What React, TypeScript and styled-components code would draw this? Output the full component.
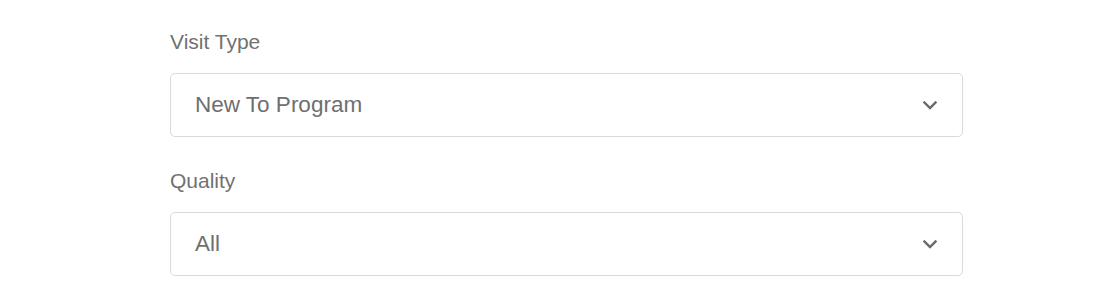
import styled, { createGlobalStyle } from "styled-components";

const GlobalStyle = createGlobalStyle`
  body {
    margin: 0;
    background: #ffffff;
    font-family: "Liberation Sans", Arial, Helvetica, sans-serif;
  }
`

const Form = styled.div`
  display: flex;
  flex-direction: column;
  gap: 32px;
  width: 793px;
  margin-left: 170px;
  padding-top: 30px;
`

const Field = styled.div`
  display: flex;
  flex-direction: column;
`

const Label = styled.label`
  font-size: 21px;
  line-height: 24px;
  color: #717171;
  margin-bottom: 19px;
`

const SelectBox = styled.div`
  box-sizing: border-box;
  height: 64px;
  border: 1px solid #dadada;
  border-radius: 5px;
  display: flex;
  align-items: center;
  justify-content: space-between;
  padding: 0 25px 0 24px;
  background: #fff;
  cursor: pointer;
`

const Value = styled.span`
  font-size: 22.5px;
  line-height: 26px;
  color: #6f6f6f;
`

const Chevron = () => (
  <svg width="14" height="9" viewBox="0 0 14 9" fill="none">
    <path d="M1.5 1.5 L7 7 L12.5 1.5" stroke="#6a6a6a" strokeWidth="2.4" strokeLinecap="square" />
  </svg>
)

const Dropdown = ({ label, value }: { label: string; value: string }) => (
  <Field>
    <Label>{label}</Label>
    <SelectBox>
      <Value>{value}</Value>
      <Chevron />
    </SelectBox>
  </Field>
)

const App = () => {
  return (
    <>
      <GlobalStyle />
      <Form>
        <Dropdown label="Visit Type" value="New To Program" />
        <Dropdown label="Quality" value="All" />
      </Form>
    </>
  )
}

export default App;
